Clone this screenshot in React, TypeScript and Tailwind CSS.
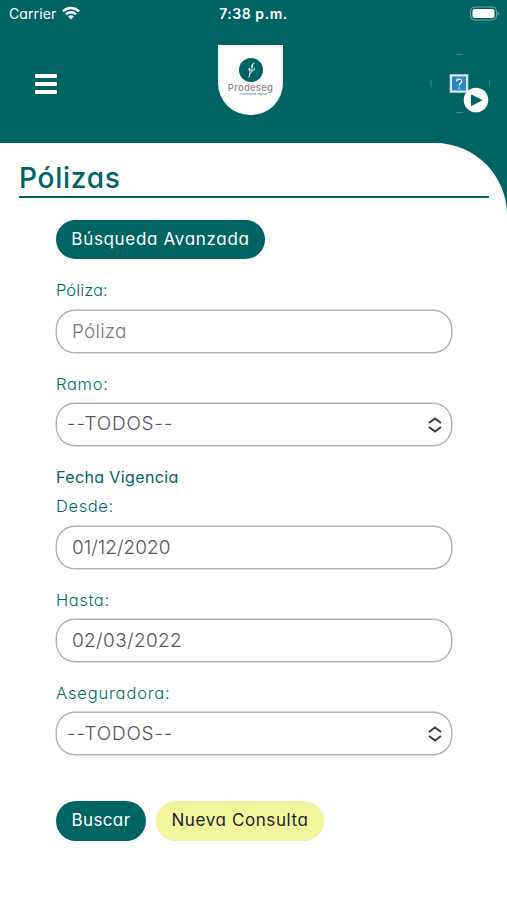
import type { ReactNode } from "react";

function StatusBar() {
  return (
    <div className="flex h-7 items-center justify-between pl-[9px] pr-[7px] text-white">
      <div className="flex w-[180px] items-center gap-[6px] pb-px text-[14px] tracking-[0.1px]">
        <span>Carrier</span>
        <svg className="-mt-[2px]" width="18" height="14" viewBox="0 0 19 14" fill="none" stroke="currentColor" strokeWidth="2.6">
          <path d="M1 5.2C5.8.5 13.2.5 18 5.2" />
          <path d="M4.1 8.4c3.1-3 7.7-3 10.8 0" />
          <path d="M9.5 13.8 6.4 10.7c1.8-1.7 4.4-1.7 6.2 0z" fill="currentColor" stroke="none" />
        </svg>
      </div>
      <div className="-ml-[2px] pb-px text-[14px] font-semibold tracking-[0.55px]">7:38 p.m.</div>
      <div className="flex w-[180px] justify-end pb-[2px]">
        <svg width="31" height="15" viewBox="0 0 31 15">
          <rect x="1.500" y="1" width="26" height="13" rx="4" fill="none" stroke="#6ca3a2" />
          <rect x="3.500" y="3" width="22" height="9" rx="2" fill="white" />
          <path d="M28.500 5.500c2 .8 2 3.200 0 4z" fill="#6ca3a2" />
        </svg>
      </div>
    </div>
  );
}

function Logo() {
  return (
    <div className="flex h-[70px] w-[65px] flex-col items-center rounded-b-[32px] bg-white pt-[13px]">
      <svg className="shrink-0" width="24" height="24" viewBox="0 0 24 24" fill="none">
        <circle cx="12" cy="12" r="12" fill="#006463" />
        <path d="M10 19c1-3 1-5 .7-8.200M11 16c3-2 1-5 3-10M9.500 11.500c.2-2 1.500-2 1.400 1M12.500 9c.1-2 1-3 2.500-4M12.800 13c2 0 2.500-1 2.700-3" stroke="white" strokeWidth="0.9" strokeLinecap="round" />
      </svg>
      <div className="text-[9.5px] leading-[11px] font-medium tracking-[0.25px] text-[#8c8c8c]">Prodeseg</div>
      <div className="ml-[6px] text-[2.5px] leading-[4px] text-[#00706b]">Promotora de Seguros</div>
    </div>
  );
}

function Avatar() {
  return (
    <div className="relative h-[60px] w-[60px]">
      <svg width="60" height="60" viewBox="0 0 60 60" fill="none">
        <path d="M26 1.500h7M26 59.500h7M1 27v7M59.500 27v7" stroke="#4b8d8b" strokeWidth="0.8" />
        <rect x="20" y="21.500" width="18" height="18" fill="#d9edf8" stroke="#9fc8df" strokeWidth="0.8" />
        <rect x="22" y="23.500" width="14" height="14" fill="#2c87c6" />
        <path d="M26.500 28.500c.1-3.300 5.200-3.200 5.200-.2 0 2-2.500 2-2.500 4.200M29.200 34.500v1.200" stroke="white" strokeWidth="1.300" />
      </svg>
      <svg className="absolute top-[34px] left-[33px]" width="26" height="26" viewBox="0 0 26 26">
        <circle cx="13" cy="13" r="12.300" fill="white" />
        <path d="M8.500 8 18.500 13.200l-10 5.300z" fill="#006463" stroke="#006463" strokeLinejoin="round" />
      </svg>
    </div>
  );
}

const inputClass =
  "h-[43px] w-full rounded-[19px] border border-[#b2b2b2] bg-white px-[15px] text-[19px] font-light text-[#55575b] outline-none ring-[0.4px] ring-[#b2b2b2] placeholder:text-[#777b80]";

function Field({ label, tracking, children }: { label: string; tracking: string; children: ReactNode }) {
  return (
    <label className="block h-[93.300px]">
      <span className={"block h-[31.400px] text-[16.500px] leading-6 font-light text-[#006f68] " + tracking}>{label}</span>
      {children}
    </label>
  );
}

function SelectBox() {
  return (
    <button type="button" className="flex h-[43px] w-full items-center justify-between rounded-[19px] border border-[#b2b2b2] bg-white pr-[9px] pl-[10px] text-[19px] font-light tracking-[0.8px] text-[#55575b] ring-[0.4px] ring-[#b2b2b2]">
      <span>--TODOS--</span>
      <svg width="14" height="16" viewBox="0 0 14 16" fill="none" stroke="#343a40" strokeWidth="1.900">
        <path d="m1 6 6-4.600L13 6M1 10l6 4.600L13 10" />
      </svg>
    </button>
  );
}

export default function App() {
  return (
    <main className="h-[900px] w-[507px] overflow-hidden bg-white font-['Inter','Noto_Sans',sans-serif] [font-feature-settings:'cv11']">
      <header className="h-[142.600px] bg-[#006463]">
        <StatusBar />
        <div className="grid grid-cols-[183px_65px_1fr] pt-[17px] pr-[17px] pl-[35px]">
          <button type="button" aria-label="Menú" className="mt-[29px] flex h-[20px] w-[60px] flex-col justify-between">
            <span className="h-[4px] w-[22px] rounded-[1px] bg-white" />
            <span className="h-[4px] w-[22px] rounded-[1px] bg-white" />
            <span className="h-[4px] w-[22px] rounded-[1px] bg-white" />
          </button>
          <Logo />
          <div className="flex justify-end pt-[8px]"><Avatar /></div>
        </div>
      </header>
      <div className="bg-[linear-gradient(#006463_75px,white_75px)]">
        <section className="h-[758px] rounded-tr-[72px] bg-white pr-[18px] pl-[19px] pt-[17px]">
          <h1 className="h-[38px] border-b-2 border-[#006463] text-[28px] leading-[37px] font-medium tracking-[0.75px] text-[#006463]">Pólizas</h1>
          <form className="px-[37px] pt-[22px]">
            <button type="button" className="mb-[19.300px] block h-[39.500px] w-[209px] rounded-full bg-[#006463] text-[17px] tracking-[0.68px] text-white">Búsqueda Avanzada</button>
            <Field label="Póliza:" tracking="tracking-[0.1px]"><input className={inputClass + " tracking-[0.200px]"} placeholder="Póliza" /></Field>
            <Field label="Ramo:" tracking="tracking-[0.7px]"><SelectBox /></Field>
            <h2 className="h-[29.300px] text-[16px] leading-6 tracking-[0.380px] text-[#006463]">Fecha Vigencia</h2>
            <Field label="Desde:" tracking="tracking-[0.6px]"><input className={inputClass} defaultValue="01/12/2020" /></Field>
            <Field label="Hasta:" tracking="tracking-[0.6px]"><input className={inputClass + " tracking-[0.350px]"} defaultValue="02/03/2022" /></Field>
            <Field label="Aseguradora:" tracking="tracking-[0.85px]"><SelectBox /></Field>
            <div className="flex gap-[10px] pt-[26.500px]">
              <button type="button" className="h-[40px] w-[90px] rounded-full bg-[#006463] pt-px text-[17px] tracking-[0.350px] text-white">Buscar</button>
              <button type="button" className="h-[40px] w-[168px] rounded-full bg-[#f1f59b] pt-px text-[17px] tracking-[0.600px] text-[#212529]">Nueva Consulta</button>
            </div>
          </form>
        </section>
      </div>
    </main>
  );
}
